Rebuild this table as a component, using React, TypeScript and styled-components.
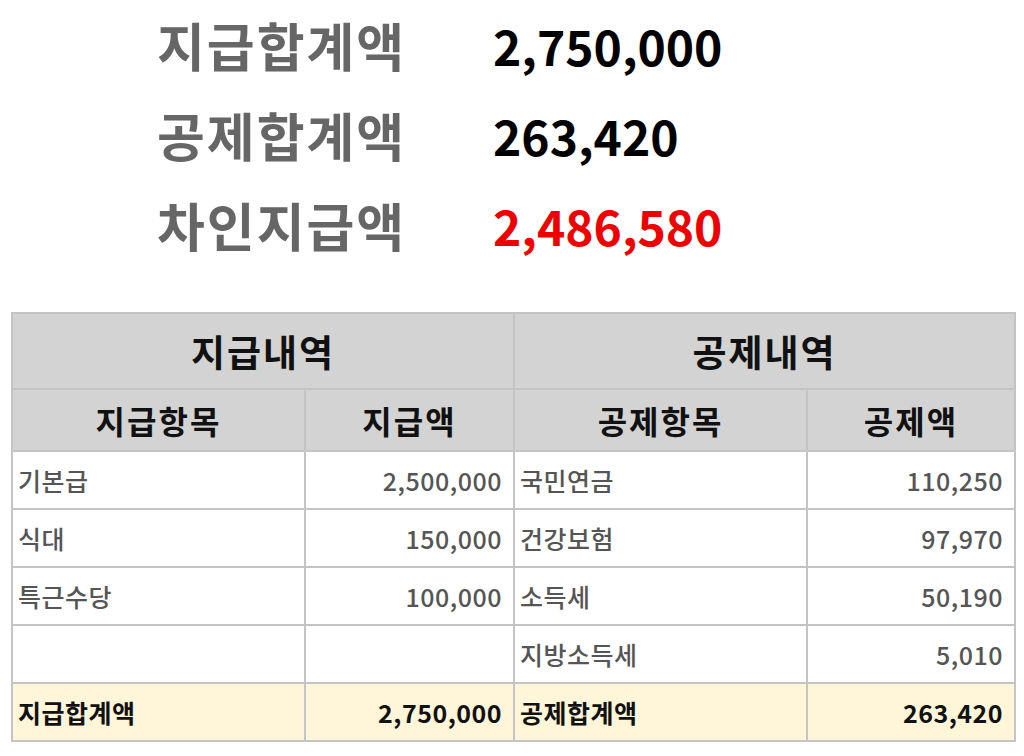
import React from 'react';
import styled, { createGlobalStyle } from 'styled-components';

const GlobalStyle = createGlobalStyle`
  body {
    margin: 0;
    background: #ffffff;
    font-family: "Noto Sans CJK KR", "Noto Sans", sans-serif;
  }
`

const Page = styled.div`
  width: 1024px;
  height: 756px;
  overflow: hidden;
`

const Summary = styled.div`
  display: grid;
  grid-template-columns: 335px auto;
  grid-auto-rows: 90px;
  padding: 0 0 0 157px;
  height: 312px;
  box-sizing: border-box;
`

const SummaryLabel = styled.div`
  font-size: 52px;
  font-weight: 700;
  color: #666666;
  letter-spacing: 2px;
  line-height: 90px;
`

const SummaryValue = styled.div<{ $red?: boolean }>`
  font-size: 48px;
  font-weight: 700;
  color: ${p => (p.$red ? '#ee0000' : '#000000')};
  line-height: 90px;
  margin-left: 1px;
`

const Table = styled.table`
  margin-left: 11px;
  width: 1003px;
  border-collapse: collapse;
  table-layout: fixed;
`

const Cell = styled.td<{ $align?: 'left' | 'right' | 'center'; $total?: boolean }>`
  border: 2px solid #c4c4c4;
  height: 58px;
  padding: 0 ${p => (p.$align === 'right' ? '11px' : '5px')};
  text-align: ${p => p.$align || 'left'};
  font-size: 25px;
  letter-spacing: 0.5px;
  font-weight: ${p => (p.$total ? 700 : 500)};
  color: ${p => (p.$total ? '#111111' : '#555555')};
  background: ${p => (p.$total ? '#fff5d8' : '#ffffff')};
  box-sizing: border-box;
  white-space: nowrap;
`

const HeadCell = styled.th<{ $big?: boolean }>`
  border: 2px solid #c4c4c4;
  background: #d3d3d3;
  height: ${p => (p.$big ? '76px' : '62px')};
  font-size: ${p => (p.$big ? '37px' : '32px')};
  font-weight: 700;
  color: #111111;
  letter-spacing: 2px;
  text-align: center;
  padding: 0;
  box-sizing: border-box;
`

type Line = { name: string; amount: string }

const pay: Line[] = [
  { name: '기본급', amount: '2,500,000' },
  { name: '식대', amount: '150,000' },
  { name: '특근수당', amount: '100,000' },
  { name: '', amount: '' },
]

const deduct: Line[] = [
  { name: '국민연금', amount: '110,250' },
  { name: '건강보험', amount: '97,970' },
  { name: '소득세', amount: '50,190' },
  { name: '지방소득세', amount: '5,010' },
]

const App: React.FC = () => (
  <Page>
    <GlobalStyle />
    <Summary>
      <SummaryLabel>지급합계액</SummaryLabel>
      <SummaryValue>2,750,000</SummaryValue>
      <SummaryLabel>공제합계액</SummaryLabel>
      <SummaryValue>263,420</SummaryValue>
      <SummaryLabel>차인지급액</SummaryLabel>
      <SummaryValue $red>2,486,580</SummaryValue>
    </Summary>
    <Table>
      <colgroup>
        <col style={{ width: 293 }} />
        <col style={{ width: 209 }} />
        <col style={{ width: 293 }} />
        <col style={{ width: 208 }} />
      </colgroup>
      <thead>
        <tr>
          <HeadCell $big colSpan={2}>지급내역</HeadCell>
          <HeadCell $big colSpan={2}>공제내역</HeadCell>
        </tr>
        <tr>
          <HeadCell>지급항목</HeadCell>
          <HeadCell>지급액</HeadCell>
          <HeadCell>공제항목</HeadCell>
          <HeadCell>공제액</HeadCell>
        </tr>
      </thead>
      <tbody>
        {pay.map((p, i) => (
          <tr key={i}>
            <Cell>{p.name}</Cell>
            <Cell $align="right">{p.amount}</Cell>
            <Cell>{deduct[i].name}</Cell>
            <Cell $align="right">{deduct[i].amount}</Cell>
          </tr>
        ))}
        <tr>
          <Cell $total>지급합계액</Cell>
          <Cell $total $align="right">2,750,000</Cell>
          <Cell $total>공제합계액</Cell>
          <Cell $total $align="right">263,420</Cell>
        </tr>
      </tbody>
    </Table>
  </Page>
)

export default App;
